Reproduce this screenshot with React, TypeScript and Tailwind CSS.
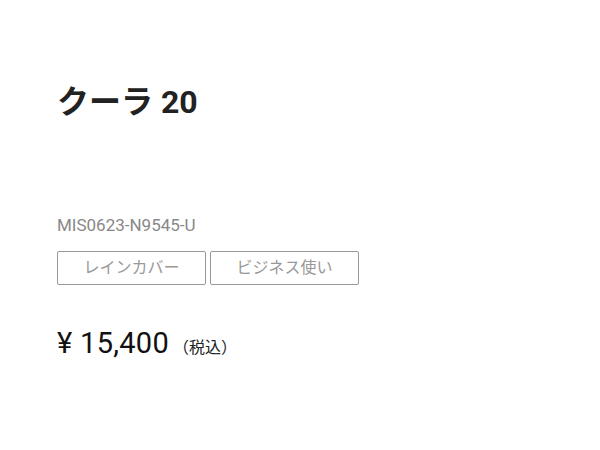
import React from 'react';

const tags = ['レインカバー', 'ビジネス使い'];

export default function App() {
  return (
    <div
      className="w-[600px] h-[450px] bg-white pl-[57px] pt-[83px]"
      style={{ fontFamily: 'Roboto, "Noto Sans CJK JP", sans-serif' }}
    >
      <h1 className="text-[32px] leading-[38px] font-bold text-[#222]">クーラ 20</h1>

      <p className="mt-[92px] text-[17px] leading-[24px] text-[#888]">MIS0623-N9545-U</p>

      <div className="mt-[14px] flex gap-[4px]">
        {tags.map(tag => (
          <span
            key={tag}
            className="w-[149px] h-[34px] flex items-center justify-center border border-[#999] rounded-[2px] text-[16px] text-[#999]"
          >
            {tag}
          </span>
        ))}
      </div>

      <div className="mt-[40px] flex items-baseline">
        <span className="text-[29px] leading-[36px] tracking-[0.3px] text-[#111]">¥ 15,400</span>
        <span className="ml-[4px] text-[16px] text-[#222]">（税込）</span>
      </div>
    </div>
  );
}
